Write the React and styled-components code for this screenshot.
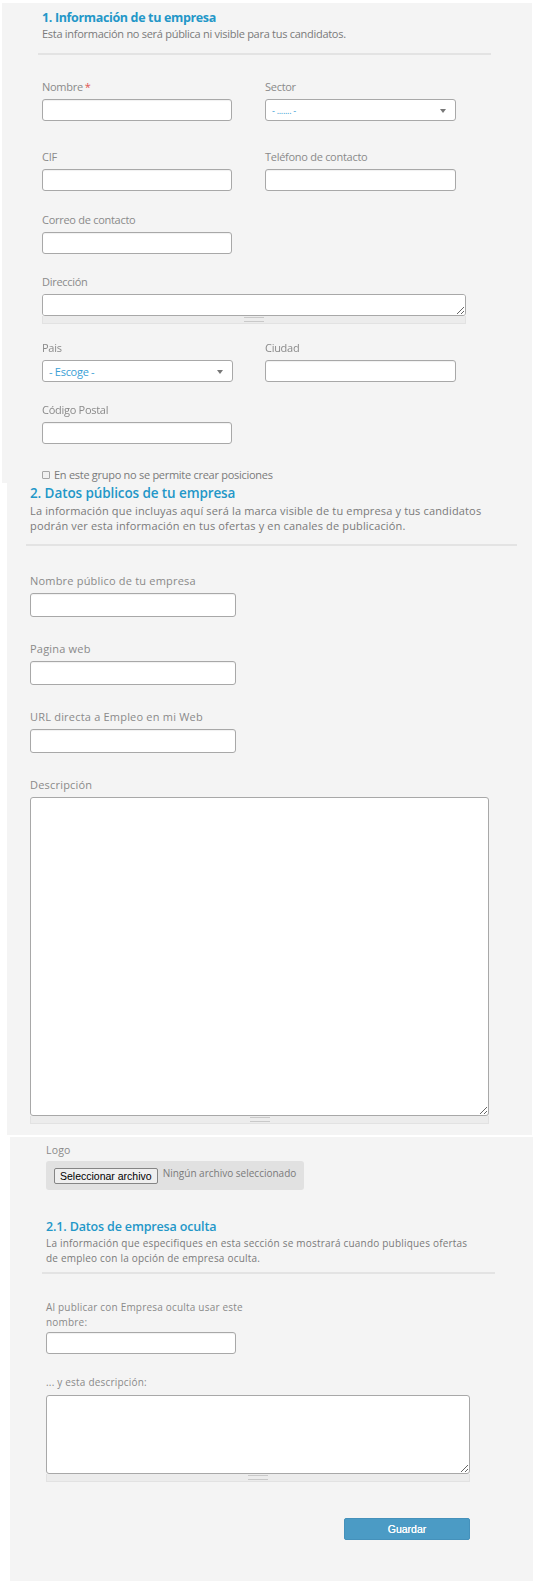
import React from "react";
import styled, { createGlobalStyle } from "styled-components";

const GlobalStyle = createGlobalStyle`
  html, body {
    margin: 0;
    padding: 0;
    background: #ffffff;
  }
  body {
    font-family: "Open Sans", "Liberation Sans", sans-serif;
    color: #888;
  }
  * {
    box-sizing: border-box;
  }
`;

const Page = styled.div`
  width: 540px;
  height: 1587px;
  padding-top: 3px;
  display: flex;
  flex-direction: column;
  overflow: hidden;
`;

const Panel = styled.section`
  background: #f4f4f4;
  margin-left: ${(p) => p.$left}px;
  width: ${(p) => p.$width}px;
  height: ${(p) => p.$height}px;
  padding-left: ${(p) => p.$padLeft}px;
  padding-top: ${(p) => p.$padTop || 0}px;
  margin-top: ${(p) => p.$gap || 0}px;
  letter-spacing: ${(p) => p.$ls || 0}px;
  flex-shrink: 0;
  display: flex;
  flex-direction: column;
`;

const Title = styled.h2`
  margin: 0;
  font-weight: ${(p) => p.$weight || 700};
  color: #2397c8;
  font-size: ${(p) => p.$size}px;
  line-height: ${(p) => p.$lh}px;
  letter-spacing: ${(p) => p.$ls || 0}px;
  white-space: nowrap;
`;

const Intro = styled.p`
  margin: 0;
  color: #7a7a7a;
  font-size: ${(p) => p.$size}px;
  line-height: ${(p) => p.$lh}px;
  letter-spacing: ${(p) => (p.$ls !== undefined ? `${p.$ls}px` : "inherit")};
  max-width: ${(p) => p.$max || 480}px;
`;

const Divider = styled.hr`
  border: none;
  height: 2px;
  background: #e3e3e3;
  margin: ${(p) => p.$top}px 0 0 -4px;
  width: ${(p) => p.$width}px;
`;

const Row = styled.div`
  display: grid;
  grid-template-columns: ${(p) => p.$cols || "190px 191px"};
  column-gap: 33px;
  margin-top: ${(p) => p.$top}px;
`;

const Field = styled.div`
  display: flex;
  flex-direction: column;
`;

const Label = styled.label`
  display: block;
  font-size: ${(p) => p.$size || 11}px;
  line-height: ${(p) => p.$lh || 16}px;
  letter-spacing: ${(p) => (p.$ls !== undefined ? `${p.$ls}px` : "inherit")};
  color: #8a8a8a;
  margin-bottom: ${(p) => p.$mb ?? 4}px;
  white-space: nowrap;
`;

const Required = styled.span`
  color: #e05555;
  margin-left: 2px;
`;

const TextInput = styled.input`
  display: block;
  width: ${(p) => p.$width || 190}px;
  height: ${(p) => p.$height || 22}px;
  margin: 0;
  padding: 2px 6px;
  border: 1px solid #a8a8a8;
  border-radius: 3px;
  background: #fff;
  box-shadow: inset 0 1px 1px rgba(0, 0, 0, 0.06);
  font-family: inherit;
  font-size: 11px;
  outline: none;
`;

const SelectBox = styled.div`
  position: relative;
  width: 191px;
  height: 22px;
  border: 1px solid #a8a8a8;
  border-radius: 3px;
  background: #fff;
  padding-left: 6px;
  display: flex;
  align-items: center;
  font-size: ${(p) => p.$size || 11}px;
  color: #3aa0d5;
`;

const Caret = styled.span`
  position: absolute;
  right: 9px;
  top: 9px;
  width: 0;
  height: 0;
  border-left: 3px solid transparent;
  border-right: 3px solid transparent;
  border-top: 4px solid #777;
`;

const AreaWrap = styled.div`
  display: flex;
  flex-direction: column;
  width: ${(p) => p.$width}px;
`;

const TextArea = styled.textarea`
  display: block;
  width: 100%;
  height: ${(p) => p.$height}px;
  margin: 0;
  padding: 4px 6px;
  border: 1px solid #a8a8a8;
  border-radius: 3px;
  background: #fff;
  font-family: inherit;
  font-size: 11px;
  resize: both;
  outline: none;
`;

const Grip = styled.div`
  height: 8px;
  background: #ececec;
  border: 1px solid #e2e2e2;
  border-top: none;
  display: flex;
  justify-content: center;
  align-items: center;
  &::after {
    content: "";
    width: 20px;
    height: 3px;
    border-top: 1px solid #c9c9c9;
    border-bottom: 1px solid #c9c9c9;
  }
`;

const CheckRow = styled.label`
  display: flex;
  align-items: center;
  gap: 4px;
  margin-top: 24px;
  font-size: 11px;
  line-height: 14px;
  color: #7a7a7a;
  white-space: nowrap;
`;

const Check = styled.span`
  width: 8px;
  height: 8px;
  border: 1px solid #a5a5a5;
  border-radius: 1px;
  background: #f0f0f0;
`;

const Stack = styled.div`
  display: flex;
  flex-direction: column;
  margin-top: ${(p) => p.$top}px;
`;

const FileBox = styled.div`
  width: 258px;
  height: 29px;
  background: #e1e1e1;
  border-radius: 3px;
  padding: 7px 0 0 8px;
  display: flex;
  align-items: flex-start;
  gap: 5px;
  white-space: nowrap;
`;

const FileButton = styled.button`
  height: 16px;
  padding: 0 5px;
  font-family: "Liberation Sans", Arial, sans-serif;
  font-size: 10.5px;
  line-height: 14px;
  letter-spacing: 0;
  color: #000;
  background: #efefef;
  border: 1px solid #858585;
  border-radius: 2px;
  white-space: nowrap;
`;

const FileName = styled.span`
  font-size: 10px;
  line-height: 12px;
  letter-spacing: 0;
  color: #7a7a7a;
  margin-top: -1px;
`;

const Actions = styled.div`
  display: flex;
  justify-content: flex-end;
  width: 424px;
  margin-top: 36px;
`;

const SaveButton = styled.button`
  width: 126px;
  height: 22px;
  border: 1px solid #4591bb;
  border-radius: 2px;
  background: #4b9bc5;
  color: #fff;
  font-family: "Liberation Sans", Arial, sans-serif;
  font-size: 10.5px;
  font-weight: 400;
  text-shadow: 0 0 0.5px #fff;
`;

function Input({ label, required, width, height, labelProps }) {
  return (
    <Field>
      <Label {...labelProps}>
        {label}
        {required && <Required>*</Required>}
      </Label>
      <TextInput type="text" $width={width} $height={height} />
    </Field>
  );
}

function Select({ label, value, size }) {
  return (
    <Field>
      <Label>{label}</Label>
      <SelectBox $size={size}>
        {value}
        <Caret />
      </SelectBox>
    </Field>
  );
}

function Area({ label, width, height, labelProps }) {
  return (
    <Field>
      <Label {...labelProps}>{label}</Label>
      <AreaWrap $width={width}>
        <TextArea $height={height} />
        <Grip />
      </AreaWrap>
    </Field>
  );
}

const p2Label = { $size: 11, $lh: 15, $ls: 0.2, $mb: 5 };
const p3Label = { $size: 10, $lh: 15, $ls: 0.2, $mb: 5 };

export default function App() {
  return (
    <>
      <GlobalStyle />
      <Page>
        <Panel $left={2} $width={530} $height={480} $padLeft={40} $padTop={6} $ls={-0.28}>
          <Title $size={12.5} $lh={17} $ls={-0.35}>1. Información de tu empresa</Title>
          <Intro $size={11} $lh={16}>
            Esta información no será pública ni visible para tus candidatos.
          </Intro>
          <Divider $top={11} $width={453} />

          <Row $top={24}>
            <Input label="Nombre" required />
            <Select label="Sector" value="- ....... -" size={9} />
          </Row>
          <Row $top={28}>
            <Input label="CIF" />
            <Input label="Teléfono de contacto" width={191} />
          </Row>
          <Row $top={21}>
            <Input label="Correo de contacto" />
          </Row>
          <Row $top={20} $cols="424px">
            <Area label="Dirección" width={424} height={22} />
          </Row>
          <Row $top={16}>
            <Select label="Pais" value="- Escoge -" />
            <Input label="Ciudad" width={191} />
          </Row>
          <Row $top={20}>
            <Input label="Código Postal" />
          </Row>
          <CheckRow>
            <Check />
            En este grupo no se permite crear posiciones
          </CheckRow>
        </Panel>

        <Panel $left={7} $width={525} $height={652} $padLeft={23}>
          <Title $size={13.5} $lh={20} $weight={600} $ls={-0.1}>
            2. Datos públicos de tu empresa
          </Title>
          <Intro $size={11} $lh={15} $ls={0.15} $max={465}>
            La información que incluyas aquí será la marca visible de tu empresa y tus candidatos
            podrán ver esta información en tus ofertas y en canales de publicación.
          </Intro>
          <Divider $top={11} $width={491} />

          <Stack $top={27}>
            <Input label="Nombre público de tu empresa" width={206} height={24} labelProps={p2Label} />
          </Stack>
          <Stack $top={24}>
            <Input label="Pagina web" width={206} height={24} labelProps={p2Label} />
          </Stack>
          <Stack $top={24}>
            <Input label="URL directa a Empleo en mi Web" width={206} height={24} labelProps={p2Label} />
          </Stack>
          <Stack $top={24}>
            <Area label="Descripción" width={459} height={319} labelProps={p2Label} />
          </Stack>
        </Panel>

        <Panel $left={10} $width={523} $height={444} $padLeft={36} $padTop={6} $gap={2}>
          <Label $size={10.5} $lh={15} $ls={0.2} $mb={3}>Logo</Label>
          <FileBox>
            <FileButton type="button">Seleccionar archivo</FileButton>
            <FileName>Ningún archivo seleccionado</FileName>
          </FileBox>

          <Stack $top={28}>
            <Title $size={12.5} $lh={18} $weight={600} $ls={-0.15}>
              2.1. Datos de empresa oculta
            </Title>
            <Intro $size={10} $lh={15} $ls={0.2} $max={428}>
              La información que especifiques en esta sección se mostrará cuando publiques ofertas
              de empleo con la opción de empresa oculta.
            </Intro>
          </Stack>
          <Divider $top={6} $width={453} />

          <Stack $top={26}>
            <Field>
              <Label {...p3Label} $mb={2}>
                Al publicar con Empresa oculta usar este
                <br />
                nombre:
              </Label>
              <TextInput type="text" $width={190} />
            </Field>
          </Stack>
          <Stack $top={21}>
            <Area label="... y esta descripción:" width={424} height={79} labelProps={p3Label} />
          </Stack>
          <Actions>
            <SaveButton type="button">Guardar</SaveButton>
          </Actions>
        </Panel>
      </Page>
    </>
  );
}
